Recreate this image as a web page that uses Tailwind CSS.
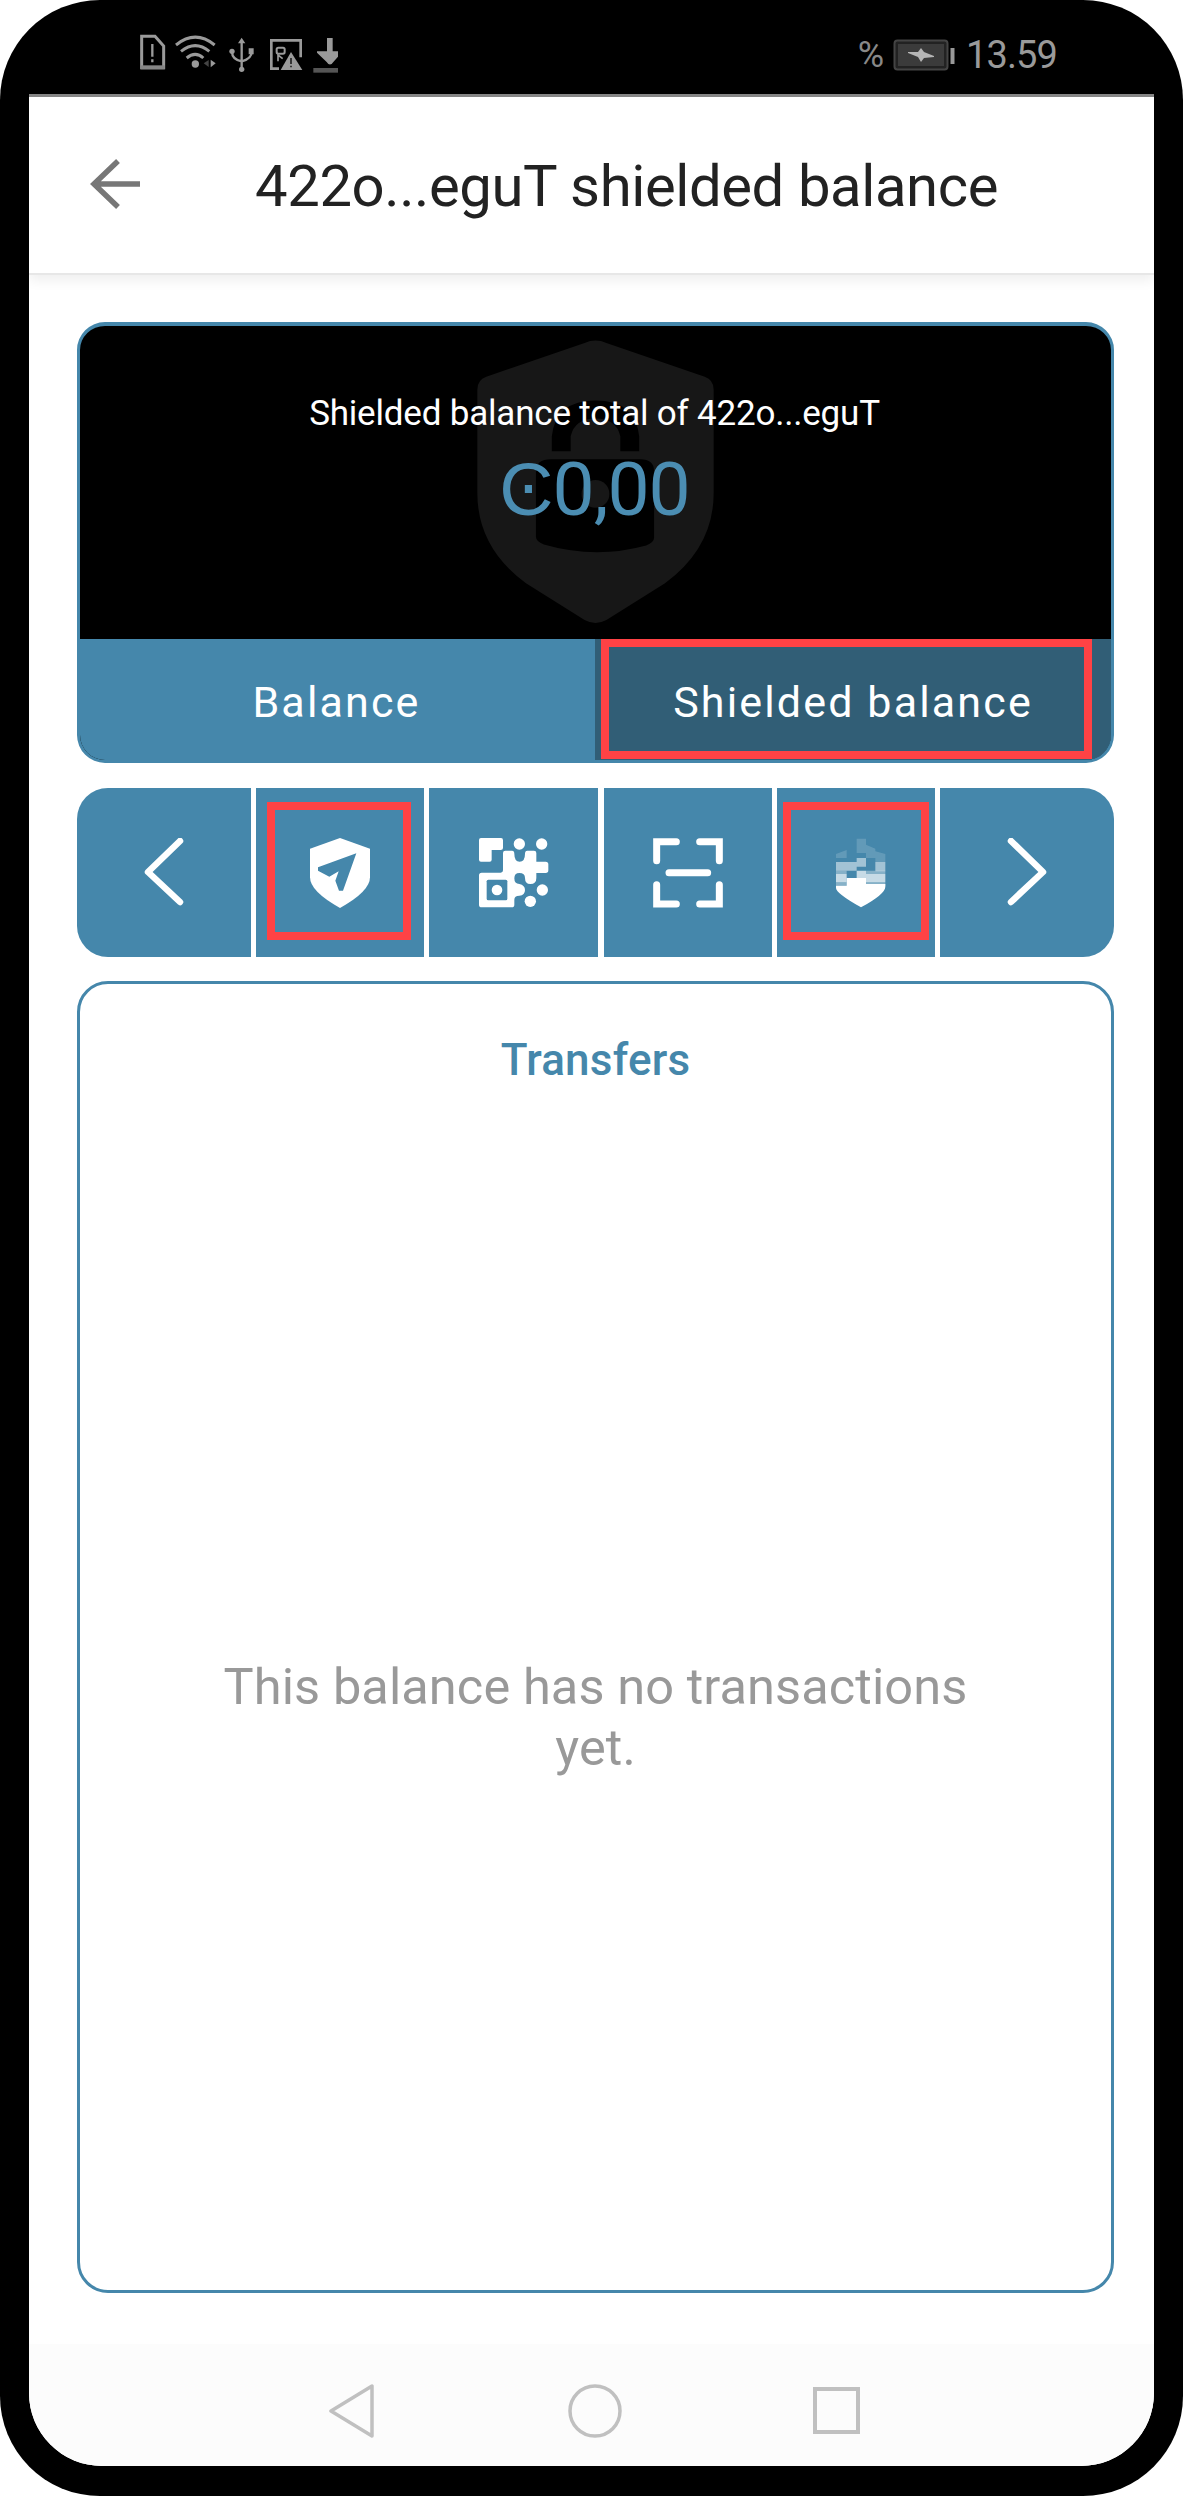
<!DOCTYPE html>
<html lang="en">
<head>
<meta charset="utf-8">
<title>Shielded balance</title>
<script src="https://cdn.jsdelivr.net/npm/@tailwindcss/browser@4"></script>
</head>
<body class="bg-white font-['Roboto',sans-serif]">
<div class="flex h-[2496px] w-[1183px] flex-col rounded-[100px] bg-black px-[29px] pb-[30px]">
  <!-- Status bar -->
  <div class="flex h-[94px] items-start justify-between pt-[30px] pr-[97px] pl-[101px] text-[#9a9a9a]">
    <svg class="h-[50px] w-[220px]" viewBox="390 90 660 150" fill="none" stroke="#9a9a9a" stroke-width="9">
      <path d="M425 109H465L491 138V203H425Z"/><path d="M422 202H494" stroke="#858585" stroke-width="12"/><path d="M457 132V170M457 178V187" stroke-width="7"/>
      <path d="M528 135Q586 88 644 135M543 154Q586 120 628 154M560 174Q586 152 610 174"/><circle cx="586" cy="192" r="11" fill="#9a9a9a" stroke="none"/>
      <path d="M626 180L611 190L626 201Z" fill="#444" stroke="none"/><path d="M632 179L647 190L632 202Z" fill="#9a9a9a" stroke="none"/>
      <path d="M725 122V212M696 155Q696 178 725 184Q755 176 755 155" stroke-width="7"/><path d="M725 113L736 130H714ZM746 145H761V163H746Z" fill="#9a9a9a" stroke="none"/><circle cx="696" cy="154" r="8" fill="#9a9a9a" stroke="none"/><circle cx="725" cy="208" r="8" fill="#9a9a9a" stroke="none"/>
      <path d="M837 206H814V121H902V172" stroke-width="8"/><rect x="830" y="143" width="24" height="18" rx="5" stroke-width="6"/><path d="M834 184V165L848 176" stroke-width="5"/>
      <path d="M873 156L907 210H842Z" fill="#9a9a9a" stroke="none"/><path d="M873 174V192M873 197V202" stroke="#222" stroke-width="5"/>
      <path d="M981 114H998V154H1014V170L1000 186Q990 201 980 186L951 158V154H981Z" fill="#9a9a9a" stroke="none"/><path d="M940 211H1014" stroke="#555" stroke-width="14"/>
    </svg>
    <div class="flex h-[50px] items-center">
      <span class="mr-[1px] text-[36px] leading-[50px] tracking-[-1px] text-[#888]">%</span>
      <svg class="mr-[9px] ml-[9px] h-[34px] w-[64px]" viewBox="0 0 64 34"><rect x="1.500" y="2.500" width="53" height="29" rx="3" fill="#222" stroke="#444" stroke-width="2"/><rect x="5" y="6" width="46" height="22" fill="#3b3b3b"/><path d="M15 14L25 14L28 10L31 14L41 18V19L31 20L28 24L25 19L15 15Z" fill="#b5b5b5"/><path d="M59.500 10V26" stroke="#999" stroke-width="4"/></svg>
      <span class="text-[38px] leading-[50px] tracking-[-0.9px]">13.59</span>
    </div>
  </div>

  <div class="flex grow flex-col overflow-hidden rounded-b-[73px] bg-white">
    <!-- App bar -->
    <div class="flex h-[181px] shrink-0 items-center border-t-[3px] border-b-2 border-t-[#858585] border-b-[#e7e7e7] pl-[61px] shadow-[0_5px_12px_rgba(0,0,0,0.07)]">
      <svg class="h-[52px] w-[52px]" viewBox="0 0 52 52" fill="none" stroke="#777" stroke-width="5.500"><path d="M28 2L4 25L28 48M4 25H50"/></svg>
      <h1 class="ml-[113px] pt-[2px] text-[58px] leading-[70px] tracking-[-0.4px] whitespace-nowrap text-[#222]">422o...eguT shielded balance</h1>
    </div>

    <main class="flex grow flex-col pt-[47px] pr-[40px] pl-[48px]">
      <!-- Balance card -->
      <section class="flex h-[441px] flex-col overflow-hidden rounded-[28px] border-[3px] border-t-4 border-[#4587ab] bg-black">
        <div class="relative flex h-[313px] flex-col items-center pt-[66px]">
          <svg class="absolute top-[13px] left-[396px] h-[284px] w-[239px]" viewBox="0 0 240 286"><path d="M109 4Q120-1 131 4L230 38Q239 41 239 51V155Q239 210 190 246L131 283Q120 289 109 283L50 246Q1 210 1 155V51Q1 41 10 38Z" fill="#171717"/><path d="M76 113V98Q80 62 120 62Q160 62 164 98V113H145V98Q141 80 120 80Q99 80 95 98V113ZM75 121H165Q179 121 179 133V200Q179 205 171 208Q120 222 68 207Q60 204 60 199V133Q60 121 75 121Z" fill="#000"/><circle cx="120" cy="156" r="14" fill="#171717"/></svg>
          <p class="relative -ml-[2px] text-[35px] leading-[44px] tracking-[-0.2px] whitespace-nowrap text-white">Shielded balance total of 422o...eguT</p>
          <p class="relative -ml-[2px] text-[75px] leading-[106px] tracking-[-1px] whitespace-nowrap text-[#4b8db2]">Ͼ0,00</p>
        </div>
        <div class="flex grow bg-[#4587ab] text-[43px] tracking-[2.15px] text-white">
          <div class="flex w-[513px] items-center justify-center pt-[6px]">Balance</div>
          <div class="relative ml-[2px] flex grow items-center justify-center bg-[#315e76] pt-[6px]">Shielded balance
            <span class="absolute top-0 left-[6px] h-[120px] w-[491px] border-8 border-[#ff4245]"></span>
          </div>
        </div>
      </section>

      <!-- Actions -->
      <section class="mt-[25px] grid h-[169px] shrink-0 grid-cols-[174px_168px_169px_168px_158px_174px] justify-between overflow-hidden rounded-[31px]">
        <div class="flex items-center justify-center bg-[#4587ab]"><svg class="h-[70px] w-[42px]" viewBox="0 0 42 70" fill="none" stroke="#fff" stroke-width="6.500" stroke-linecap="round" stroke-linejoin="round"><path d="M37 3L5 34L37 64"/></svg></div>
        <div class="relative flex items-center justify-center bg-[#4587ab]"><svg class="h-[70px] w-[60px]" viewBox="0 0 180 210"><path d="M90 0L180 32V118Q180 160 90 210Q0 160 0 118V32Z" fill="#fff"/><path d="M139 46L24 88V98L58 116L86 100L76 128L87 158H99Z" fill="#4587ab"/></svg><span class="absolute top-[14px] left-[11px] h-[138px] w-[144px] border-8 border-[#ff4245]"></span></div>
        <div class="flex items-center justify-center bg-[#4587ab]"><svg class="h-[70px] w-[70px]" viewBox="0 0 210 210" fill="#fff"><path d="M0 6Q0 0 6 0H66Q72 0 72 7V30Q72 36 65 36H38V65Q38 71 32 71H6Q0 71 0 65Z"/><circle cx="121" cy="18" r="17"/><circle cx="188" cy="18" r="17"/><path d="M72 45Q72 38 79 38H99Q106 38 106 47Q106 71 122 71Q138 71 138 47Q138 38 145 38H165Q172 38 172 45V71H200Q208 71 208 79V97Q208 105 200 105H172V120Q172 138 154 138Q138 138 138 120Q138 105 121 105Q106 105 106 121Q106 138 121 138Q138 142 138 156Q138 172 121 173Q106 173 106 185V200Q106 208 98 208H8Q0 208 0 200V112Q0 104 8 104H65Q72 104 72 97Z"/><rect x="23" y="125" width="62" height="62" rx="5" fill="#4587ab"/><circle cx="54" cy="156" r="16"/><circle cx="154" cy="190" r="17"/><circle cx="190" cy="156" r="17"/></svg></div>
        <div class="flex items-center justify-center bg-[#4587ab]"><svg class="h-[70px] w-[70px]" viewBox="0 0 210 210" fill="none" stroke="#fff" stroke-width="21" stroke-linecap="round"><path d="M70 11H11V68M140 11H199V68M11 140V198H70M140 198H199V140M48 104H164"/></svg></div>
        <div class="relative flex items-center justify-center bg-[#4587ab] pl-[11px]"><svg class="h-[70px] w-[50px]" viewBox="0 0 150 210" fill="#fff"><path d="M0 143H32V120H90V138H148V146Q148 168 75 208Q0 166 0 150Z"/><g opacity=".16"><path d="M62 2H90V20L118 32V60H90V45H62ZM0 48L32 36V60H0ZM118 40L148 48V72H118Z"/></g><g opacity=".5"><path d="M0 72H32V98H0ZM62 60H90V86H62ZM118 72H148V100H118ZM32 72H62V98H32Z"/></g><g opacity=".7"><path d="M0 108H32V133H0ZM62 98H90V122H62ZM90 108H148V133H90Z"/></g><g opacity=".35"><path d="M0 98H32V108H0ZM0 133H32V143H0ZM90 98H148V108H90ZM90 133H148V143H90Z"/></g></svg><span class="absolute top-[14px] left-[6px] h-[138px] w-[146px] border-8 border-[#ff4245]"></span></div>
        <div class="flex items-center justify-center bg-[#4587ab]"><svg class="h-[70px] w-[42px]" viewBox="0 0 42 70" fill="none" stroke="#fff" stroke-width="6.500" stroke-linecap="round" stroke-linejoin="round"><path d="M5 3L37 34L5 64"/></svg></div>
      </section>

      <!-- Transfers -->
      <section class="mt-[24px] flex h-[1312px] shrink-0 flex-col rounded-[31px] border-[3px] border-[#4587ab]">
        <h2 class="mt-[50px] text-center text-[44px] leading-[52px] font-medium tracking-[0.2px] text-[#4587ab]">Transfers</h2>
        <p class="mt-[570px] text-center text-[50.5px] leading-[61px] tracking-[0.1px] text-[#999]">This balance has no transactions<br>yet.</p>
      </section>
    </main>

    <!-- System navigation -->
    <nav class="flex h-[122px] shrink-0 items-center justify-between bg-[#fcfcfc] pt-[12px] pr-[292px] pl-[298px]">
      <svg class="h-[54px] w-[50px]" viewBox="0 0 50 54" fill="none" stroke="#c0c0c0" stroke-width="3.500" stroke-linejoin="round"><path d="M45 2V52L4 27Z"/></svg>
      <svg class="h-[54px] w-[54px]" viewBox="0 0 54 54" fill="none" stroke="#c0c0c0" stroke-width="3.500"><circle cx="27" cy="27" r="25"/></svg>
      <svg class="h-[54px] w-[50px]" viewBox="0 0 50 54" fill="none" stroke="#c0c0c0" stroke-width="4"><rect x="3" y="5" width="43" height="43"/></svg>
    </nav>
  </div>
</div>
</body>
</html>
